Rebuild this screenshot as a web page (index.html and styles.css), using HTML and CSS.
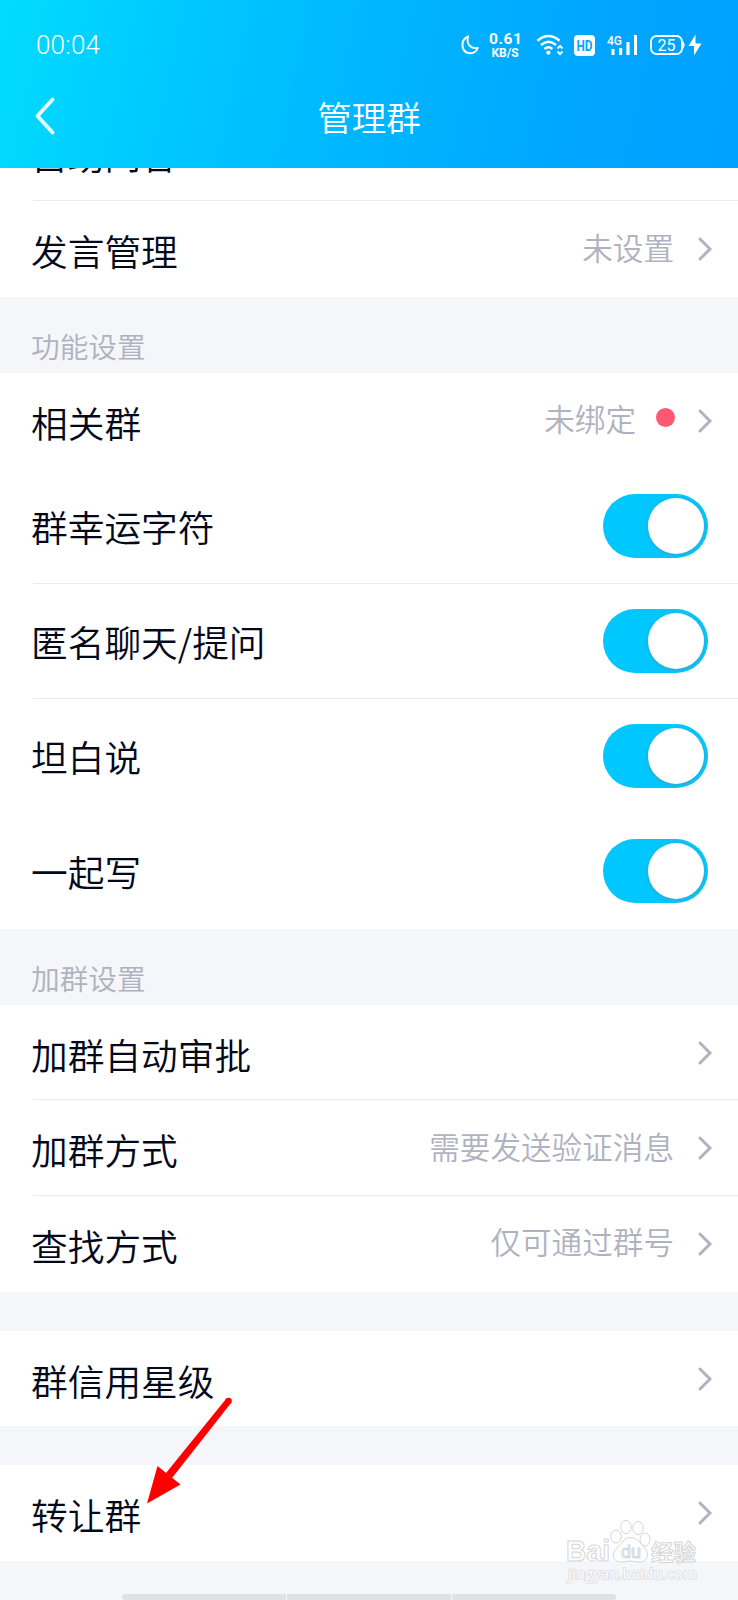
FILE: index.html
```
<!DOCTYPE html>
<html lang="zh-CN">
<head>
    <meta charset="UTF-8">
    <meta name="viewport" content="width=device-width, initial-scale=1.0">
    <title>管理群</title>
    <link rel="stylesheet" href="styles.css">
</head>
<body>
    <svg class="defs" width="0" height="0">
        <symbol id="arrow" viewBox="0 0 16 24">
            <path d="M2 2 L12 12 L2 22" fill="none" stroke="#b0b2bf" stroke-width="2.9" stroke-linecap="round"/>
        </symbol>
    </svg>

    <header>
        <div class="status-bar">
            <span class="time">00:04</span>
            <div class="status-icons">
                <svg class="moon" width="18" height="20" viewBox="0 0 18 20">
                    <path d="M7.2 1.5 C-.8 4.5 -.5 17.2 8.6 18.2 C12.5 18.5 15.6 16.2 16.8 12.8 C9.5 14.6 4.8 8.5 7.2 1.5 Z" fill="none" stroke="#fff" stroke-width="1.9" stroke-linejoin="round"/>
                </svg>
                <div class="speed">
                    <b>0.61</b>
                    <small>KB/S</small>
                </div>
                <svg class="wifi" width="28" height="22" viewBox="0 0 28 22">
                    <path d="M1.5 6.7 Q12.5 -2.8 23.5 6.7 M5 11 Q12.5 4.6 20 11 M8.4 15 Q12.5 11.6 16.4 15" fill="none" stroke="#fff" stroke-width="2.5"/>
                    <circle cx="12.4" cy="18.6" r="2.1" fill="#fff"/>
                    <path d="M21.5 14.500 L24 11.800 L26.500 14.500 M21.500 17.500 L24 20.200 L26.500 17.500" fill="none" stroke="#fff" stroke-width="1.900"/>
                </svg>
                <svg class="hd" width="21" height="21" viewBox="0 0 21 21">
                    <rect width="21" height="21" rx="4" fill="#fff"/>
                    <text x="2.500" y="15.700" textLength="16" lengthAdjust="spacingAndGlyphs">HD</text>
                </svg>
                <svg class="signal" width="32" height="24" viewBox="0 0 32 24">
                    <text x="0" y="12.800" class="net" textLength="15" lengthAdjust="spacingAndGlyphs">4G</text>
                    <path d="M4.500 17h3v6h-3z M12 16h3.200v7h-3.200z M19.400 10h3.200v13h-3.200z M27 3h3v20h-3z" fill="#fff"/>
                </svg>
                <svg class="battery" width="54" height="24" viewBox="0 0 54 24">
                    <rect x="1" y="4" width="31" height="18" rx="5.500" fill="none" stroke="#fff" stroke-width="1.900"/>
                    <path d="M33 9.500 Q35.500 13 33 16.500" fill="#fff" stroke="#fff"/>
                    <text x="16.500" y="18.500" text-anchor="middle" class="level">25</text>
                    <path d="M45.500 2.500 L38.500 14 L44 14 L44 23.500 L51.500 11.500 L45.500 11.500 Z" fill="#fff"/>
                </svg>
            </div>
        </div>
        <div class="title-bar">
            <svg class="back" width="22" height="40" viewBox="0 0 22 40">
                <path d="M18.500 3.500 L3.500 20 L18.500 36.500" fill="none" stroke="#fff" stroke-opacity=".9" stroke-width="4" stroke-linecap="round" stroke-linejoin="round"/>
            </svg>
            <h1>管理群</h1>
        </div>
    </header>

    <main>
        <section class="group">
            <div class="row line"><span class="label">自助问答</span></div>
            <div class="row">
                <span class="label">发言管理</span>
                <span class="value">未设置</span>
                <svg class="arrow"><use href="#arrow"/></svg>
            </div>
        </section>

        <h2>功能设置</h2>
        <section class="group">
            <div class="row">
                <span class="label">相关群</span>
                <span class="value">未绑定</span>
                <i class="dot"></i>
                <svg class="arrow"><use href="#arrow"/></svg>
            </div>
            <div class="row switch-row line">
                <span class="label">群幸运字符</span>
                <span class="switch"></span>
            </div>
            <div class="row switch-row line">
                <span class="label">匿名聊天/提问</span>
                <span class="switch"></span>
            </div>
            <div class="row switch-row">
                <span class="label">坦白说</span>
                <span class="switch"></span>
            </div>
            <div class="row switch-row">
                <span class="label">一起写</span>
                <span class="switch"></span>
            </div>
        </section>

        <h2>加群设置</h2>
        <section class="group">
            <div class="row line">
                <span class="label">加群自动审批</span>
                <svg class="arrow"><use href="#arrow"/></svg>
            </div>
            <div class="row line">
                <span class="label">加群方式</span>
                <span class="value">需要发送验证消息</span>
                <svg class="arrow"><use href="#arrow"/></svg>
            </div>
            <div class="row">
                <span class="label">查找方式</span>
                <span class="value">仅可通过群号</span>
                <svg class="arrow"><use href="#arrow"/></svg>
            </div>
        </section>

        <section class="group spaced">
            <div class="row">
                <span class="label">群信用星级</span>
                <svg class="arrow"><use href="#arrow"/></svg>
            </div>
        </section>

        <section class="group spaced">
            <div class="row">
                <span class="label">转让群</span>
                <svg class="arrow"><use href="#arrow"/></svg>
            </div>
        </section>
    </main>

    <div class="nav-hint"><i></i><i></i><i></i></div>

    <!-- red pointer to the last row -->
    <svg class="pointer" width="90" height="112" viewBox="0 0 90 112">
        <circle cx="83.500" cy="8" r="3.300" fill="#f00"/>
        <path d="M81 5.900 L86 10.100 L27 85 L21 80 Z" fill="#f00"/>
        <path d="M2 110.500 L12.500 73 L35.500 91.500 Z" fill="#f00"/>
    </svg>

    <svg class="watermark" width="140" height="70" viewBox="0 0 140 70">
        <g fill="#fff" stroke="#d2d2d5" stroke-width="1">
            <text x="3" y="47" class="wm-logo" textLength="44" lengthAdjust="spacingAndGlyphs">Bai</text>
            <ellipse cx="53" cy="22.500" rx="5.300" ry="6.500"/>
            <ellipse cx="63" cy="13" rx="5.200" ry="6.600"/>
            <ellipse cx="75" cy="14" rx="5.200" ry="6.600"/>
            <ellipse cx="82" cy="25.500" rx="5" ry="6.500"/>
            <path d="M68 23.500 C74 23.500 76.500 29 81 33 C87 39 85 48 77 48 C72 48 71 47 67 47 C63 47 61 48 57 48 C49 47 48.500 39 54 34 C59 29 61 23.500 68 23.500 Z"/>
            <text x="58" y="44" class="wm-du" textLength="20" lengthAdjust="spacingAndGlyphs">du</text>
            <text x="88" y="46" class="wm-cn" textLength="45" lengthAdjust="spacingAndGlyphs">经验</text>
        </g>
        <text x="5" y="65" class="wm-url" textLength="129" lengthAdjust="spacingAndGlyphs">jingyan.baidu.com</text>
    </svg>
</body>
</html>
```
FILE: styles.css
```
* {
    box-sizing: border-box;
}

body {
    position: relative;
    width: 738px;
    height: 1600px;
    margin: 0;
    overflow: hidden;
    background: #f4f6fa;
    color: #03081a;
    font-family: "Noto Sans CJK SC", sans-serif;
    font-weight: 350;
}

.defs {
    position: absolute;
}

/* Header */
header {
    position: relative;
    z-index: 1;
    height: 168px;
    background: linear-gradient(102deg, #00dcff 0%, #00c6ff 27%, #00b2ff 56%, #00a5ff 80%, #00a2ff 100%);
    color: #fff;
}

.status-bar {
    display: flex;
    justify-content: space-between;
    height: 80px;
    padding: 32px 34px 0 36px;
}

.time {
    font: 300 26px/27px Roboto, sans-serif;
    letter-spacing: 0.2px;
}

.status-icons {
    display: flex;
    align-items: flex-start;
}

.moon {
    margin: 3px 10px 0 0;
}

.speed {
    width: 32px;
    text-align: center;
    font-family: Roboto, sans-serif;
}

.speed b,
.speed small {
    display: block;
    white-space: nowrap;
    font-weight: 700;
}

.speed b {
    font-size: 15.500px;
    line-height: 14px;
    letter-spacing: 0.600px;
}

.speed small {
    font-size: 12px;
    line-height: 14px;
}

.wifi {
    margin: 2px 0 0 15px;
}

.hd {
    margin: 3px 0 0 10px;
}

.hd text {
    fill: #00a7ff;
    font: 700 14.500px Roboto, sans-serif;
}

.signal {
    margin-left: 12px;
}

.net {
    fill: #fff;
    font: 500 12.500px Roboto, sans-serif;
}

.battery {
    margin-left: 11px;
}

.level {
    fill: #fff;
    font: 400 16px Roboto, sans-serif;
}

.title-bar {
    display: flex;
    align-items: center;
    height: 76px;
    padding-left: 34px;
}

.back {
    margin-top: -4px;
}

h1 {
    flex: 1;
    margin: -4px 56px 0 0;
    text-align: center;
    font-size: 34.500px;
    font-weight: 350;
    line-height: 76px;
}

/* Settings list, scrolled a little under the header */
main {
    margin-top: -62.400px;
}

.group {
    background: #fff;
}

.spaced {
    margin-top: 39px;
}

.row {
    display: flex;
    align-items: center;
    height: 95.700px;
    padding-right: 24px;
    background: no-repeat 33px 100% / 100% 1px;
}

.line {
    background-image: linear-gradient(#e9eaed, #e9eaed);
}

.label {
    flex: 1;
    padding: 2px 0 0 31px;
    font-size: 36.700px;
    line-height: 50px;
}

.value {
    margin: -5px 24px 0 0;
    color: #b0b2bf;
    font-size: 30.600px;
    line-height: 42px;
}

.dot {
    width: 19px;
    height: 19px;
    margin: -6px 23px 0 -4px;
    border-radius: 50%;
    background: #ff5972;
}

.arrow {
    width: 16px;
    height: 24px;
}

.switch-row {
    height: 115px;
    padding-right: 30px;
}

.switch {
    display: flex;
    justify-content: flex-end;
    width: 105px;
    height: 64px;
    margin-top: -1px;
    padding: 4px;
    border-radius: 32px;
    background: #00c8ff;
}

.switch::after {
    content: "";
    width: 56px;
    height: 56px;
    border-radius: 50%;
    background: #fff;
    box-shadow: 0 1px 4px rgba(110, 130, 145, 0.6);
}

.switch-row .label {
    padding-top: 0;
    margin-top: -1px;
}

h2 {
    height: 76px;
    margin: 0;
    padding: 29px 0 0 31px;
    color: #b0b2bf;
    font-size: 28.700px;
    font-weight: 350;
    line-height: 40px;
}

/* Gesture bar at the bottom edge */
.nav-hint {
    display: flex;
    gap: 1px;
    width: 494px;
    height: 6px;
    margin: 33px 0 0 122px;
    border-radius: 3px;
    overflow: hidden;
}

.nav-hint i {
    flex: 1;
    background: #e0e1e5;
}

.pointer {
    position: absolute;
    left: 145px;
    top: 1393px;
}

.watermark {
    position: absolute;
    left: 563px;
    top: 1514px;
    opacity: 0.9;
}

.wm-logo {
    font: 700 29px "Liberation Sans", sans-serif;
}

.wm-du {
    font: 400 18px "Liberation Sans", sans-serif;
}

.wm-cn {
    font: 700 22px "Noto Sans CJK SC", sans-serif;
}

.wm-url {
    fill: #fff;
    stroke: #d9dade;
    stroke-width: 1.500px;
    paint-order: stroke;
    font: 400 14px "Open Sans", sans-serif;
}
```
